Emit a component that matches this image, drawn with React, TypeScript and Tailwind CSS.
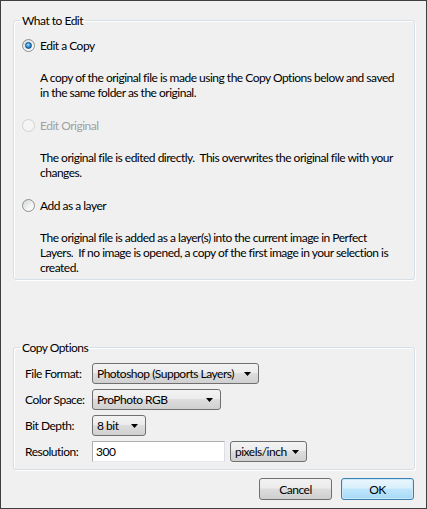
import React from 'react';

const Radio = ({ checked, disabled }: { checked?: boolean; disabled?: boolean }) => (
  <span
    className={`w-[13px] h-[13px] rounded-full border shrink-0 flex items-center justify-center ${
      disabled
        ? 'border-[#cfd0d0] bg-[#f5f5f5]'
        : 'border-[#8e8f8f] bg-[linear-gradient(135deg,#d2d3d4,#f4f4f4_60%,#ffffff)]'
    }`}
  >
    {checked && (
      <span className="w-[7px] h-[7px] rounded-full border border-[#0b4e84] bg-[radial-gradient(circle_at_40%_35%,#a6e1ff,#2a86d2_55%,#0f4f93)]" />
    )}
  </span>
);

const Select = ({ value, w }: { value: string; w: string }) => (
  <div
    className={`h-[21px] ${w} shrink-0 border border-[#707070] rounded-[3px] bg-[linear-gradient(#f3f3f3,#ececec_45%,#dddddd_50%,#d0d0d0)] flex items-center justify-between pl-[4px] pr-[7px]`}
  >
    <span className="whitespace-nowrap">{value}</span>
    <svg width="7" height="4" viewBox="0 0 7 4" className="shrink-0">
      <path d="M0 0h7L3.5 4z" fill="#000" />
    </svg>
  </div>
);

const Option = ({ label, checked, disabled, children }: { label: string; checked?: boolean; disabled?: boolean; children: React.ReactNode }) => (
  <div className="flex flex-col">
    <div className="h-[15px] flex items-center gap-[5px]">
      <Radio checked={checked} disabled={disabled} />
      <span className={disabled ? 'text-[#a0a0a0]' : ''}>{label}</span>
    </div>
    <p className="pl-[18px] mt-[17px] whitespace-nowrap">{children}</p>
  </div>
);

export default function App() {
  return (
    <div className="w-[427px] h-[509px] border border-[#3f3f3f] bg-[#f0f0f0] flex flex-col text-[12px] leading-[15px] tracking-[-0.5px] text-black font-['Lato',sans-serif]">
      <fieldset className="ml-[12px] mr-[11px] mt-[12px] border border-[#d5dfe5] rounded-[3px] shadow-[inset_1px_1px_0_#fff,1px_1px_0_#fff]">
        <legend className="ml-[6px] px-[2px]">What to Edit</legend>
        <div className="pl-[8px] pt-[10px] pb-[4px] flex flex-col gap-[18px]">
          <Option label="Edit a Copy" checked>
            A copy of the original file is made using the Copy Options below and saved
            <br />
            in the same folder as the original.
          </Option>
          <Option label="Edit Original" disabled>
            The original file is edited directly.&nbsp; This overwrites the original file with your
            <br />
            changes.
          </Option>
          <Option label="Add as a layer">
            The original file is added as a layer(s) into the current image in Perfect
            <br />
            Layers.&nbsp; If no image is opened, a copy of the first image in your selection is
            <br />
            created.
          </Option>
        </div>
      </fieldset>

      <fieldset className="mt-auto ml-[12px] mr-[11px] border border-[#d5dfe5] rounded-[3px] shadow-[inset_1px_1px_0_#fff,1px_1px_0_#fff]">
        <legend className="ml-[6px] px-[2px]">Copy Options</legend>
        <div className="pl-[11px] pt-[8px] pb-[7px] flex flex-col gap-[5px]">
          <div className="flex items-center">
            <span className="w-[67px] shrink-0 whitespace-nowrap">File Format:</span>
            <Select value="Photoshop (Supports Layers)" w="w-[167px]" />
          </div>
          <div className="flex items-center">
            <span className="w-[67px] shrink-0 whitespace-nowrap">Color Space:</span>
            <Select value="ProPhoto RGB" w="w-[129px]" />
          </div>
          <div className="flex items-center">
            <span className="w-[67px] shrink-0 whitespace-nowrap">Bit Depth:</span>
            <Select value="8 bit" w="w-[54px]" />
          </div>
          <div className="flex items-center">
            <span className="w-[67px] shrink-0 whitespace-nowrap">Resolution:</span>
            <div className="h-[21px] w-[133px] shrink-0 bg-white border border-[#abadb3] border-b-[#e3e9ef] border-r-[#dbdfe6] flex items-center pl-[3px]">300</div>
            <div className="ml-[5px]">
              <Select value="pixels/inch" w="w-[77px]" />
            </div>
          </div>
        </div>
      </fieldset>

      <div className="mt-[8px] mb-[8px] mr-[12px] flex justify-end gap-[9px]">
        <button className="w-[73px] h-[22px] border border-[#707070] rounded-[3px] bg-[linear-gradient(#f2f2f2,#ebebeb_45%,#dddddd_50%,#cfcfcf)]">
          Cancel
        </button>
        <button className="w-[73px] h-[22px] border border-[#3c7fb1] rounded-[3px] bg-[linear-gradient(#eaf6fd,#d9f0fc_45%,#bee6fd_50%,#a7d9f5)] shadow-[inset_0_0_0_1px_#c8e8f9]">
          OK
        </button>
      </div>
    </div>
  );
}
